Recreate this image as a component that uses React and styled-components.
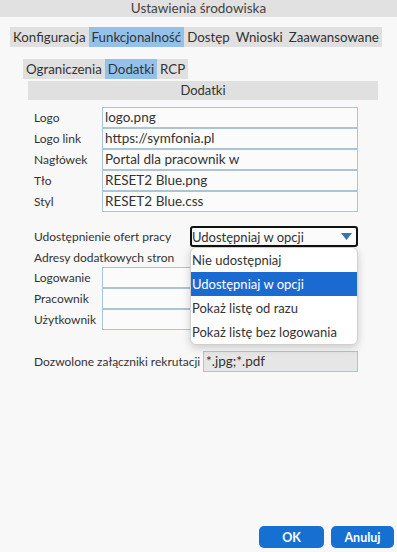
import styled, { createGlobalStyle } from 'styled-components'

const GlobalStyle = createGlobalStyle`
  html, body {
    margin: 0;
    padding: 0;
    background: #f8f8f8;
  }
  body {
    font-family: Lato, "Open Sans", sans-serif;
    font-size: 12px;
    color: #333333;
  }
`

const Window = styled.div`
  width: 397px;
  height: 552px;
  display: flex;
  flex-direction: column;
  background: #f8f8f8;
`

const TitleBar = styled.div`
  height: 17px;
  line-height: 16px;
  font-size: 13.5px;
  text-align: center;
  background: #e1e1e1;
  color: #444;
`

const Body = styled.div`
  flex: 1;
  display: flex;
  flex-direction: column;
`

const TabBar = styled.div`
  display: flex;
  align-self: flex-start;
  margin: ${({ $sub }) => ($sub ? '12px 0 0 23px' : '10px 0 0 10px')};
  background: #e0e0e0;
`

const Tab = styled.div`
  height: 20px;
  line-height: 20px;
  padding: 0 3px;
  font-size: 13.3px;
  background: ${({ $active }) => ($active ? '#93c1ea' : 'transparent')};
  white-space: nowrap;
`

const SectionHeader = styled.div`
  margin: 2px 19px 0 28px;
  height: 19px;
  line-height: 19px;
  font-size: 13px;
  text-align: center;
  background: #e0e0e0;
`

const Form = styled.div`
  display: flex;
  flex-direction: column;
  padding: 7px 39px 0 34px;
`

const FieldGroup = styled.div`
  display: flex;
  flex-direction: column;
  margin-top: ${({ $mt = 0 }) => $mt}px;
  & > * + * {
    margin-top: -1px;
  }
`

const FieldRow = styled.div`
  display: flex;
  align-items: center;
  height: 21px;
  margin-top: ${({ $mt = 0 }) => $mt}px;
`

const Label = styled.div`
  width: ${({ $w = 68 }) => $w}px;
  flex: none;
  white-space: nowrap;
`

const Input = styled.div`
  flex: 1;
  height: 21px;
  box-sizing: border-box;
  border: 1px solid #a9c5d6;
  background: ${({ $disabled }) => ($disabled ? '#e6e6e6' : '#fbfbfb')};
  padding: 0 2px;
  line-height: 19px;
  font-size: 13.5px;
  color: #333;
  white-space: nowrap;
  overflow: hidden;
`

const SelectWrap = styled.div`
  position: relative;
  flex: 1;
  align-self: stretch;
`

const Select = styled.div`
  height: 21px;
  box-sizing: border-box;
  border: 2px solid #111;
  border-radius: 3px;
  background: #fbfbfb;
  display: flex;
  align-items: center;
  justify-content: space-between;
  padding: 0 4px 0 0;
  font-size: 13px;
  color: #333;
  white-space: nowrap;
`

const Arrow = styled.svg`
  width: 11px;
  height: 7px;
  display: block;
`

const Menu = styled.div`
  position: absolute;
  left: 0;
  right: 0;
  top: 21px;
  background: #ffffff;
  border: 1px solid #d0d0d0;
  border-radius: 6px;
  box-shadow: 0 3px 8px rgba(0, 0, 0, 0.18);
  overflow: hidden;
  z-index: 5;
`

const MenuItem = styled.div`
  height: 24px;
  line-height: 24px;
  padding-left: 1px;
  font-size: 13px;
  background: ${({ $active }) => ($active ? '#1b6ad1' : 'transparent')};
  color: ${({ $active }) => ($active ? '#ffffff' : '#333')};
  white-space: nowrap;
`

const Footer = styled.div`
  display: flex;
  justify-content: flex-end;
  gap: 7px;
  padding: 0 3px 4px 0;
`

const Button = styled.button`
  width: ${({ $w }) => $w}px;
  height: 22px;
  border: none;
  border-radius: 5px;
  background: #1670d1;
  color: #ffffff;
  font-family: Lato, "Open Sans", sans-serif;
  font-size: 12.5px;
  font-weight: 700;
  padding: 0;
`

const fields = [
  ['Logo', 'logo.png'],
  ['Logo link', 'https://symfonia.pl'],
  ['Nagłówek', 'Portal dla pracownik w'],
  ['Tło', 'RESET2 Blue.png'],
  ['Styl', 'RESET2 Blue.css'],
]

const options = [
  'Nie udostępniaj',
  'Udostępniaj w opcji',
  'Pokaż listę od razu',
  'Pokaż listę bez logowania',
]

export default function App() {
  return (
    <>
      <GlobalStyle />
      <Window>
        <TitleBar>Ustawienia środowiska</TitleBar>
        <Body>
          <TabBar>
            <Tab>Konfiguracja</Tab>
            <Tab $active>Funkcjonalność</Tab>
            <Tab>Dostęp</Tab>
            <Tab>Wnioski</Tab>
            <Tab>Zaawansowane</Tab>
          </TabBar>
          <TabBar $sub>
            <Tab>Ograniczenia</Tab>
            <Tab $active>Dodatki</Tab>
            <Tab>RCP</Tab>
          </TabBar>
          <SectionHeader>Dodatki</SectionHeader>
          <Form>
            <FieldGroup>
              {fields.map(([label, value]) => (
                <FieldRow key={label}>
                  <Label>{label}</Label>
                  <Input>{value}</Input>
                </FieldRow>
              ))}
            </FieldGroup>
            <FieldRow $mt={14}>
              <Label $w={156}>Udostępnienie ofert pracy</Label>
              <SelectWrap>
                <Select>
                  <span>Udostępniaj w opcji</span>
                  <Arrow viewBox="0 0 11 7">
                    <path d="M0 0 H11 L5.5 7 Z" fill="#3b70b6" />
                  </Arrow>
                </Select>
                <Menu>
                  {options.map((o, i) => (
                    <MenuItem key={o} $active={i === 1}>{o}</MenuItem>
                  ))}
                </Menu>
              </SelectWrap>
            </FieldRow>
            <FieldRow>
              <Label $w={160}>Adresy dodatkowych stron</Label>
            </FieldRow>
            <FieldGroup $mt={-1}>
              {['Logowanie', 'Pracownik', 'Użytkownik'].map((l) => (
                <FieldRow key={l}>
                  <Label>{l}</Label>
                  <Input />
                </FieldRow>
              ))}
            </FieldGroup>
            <FieldRow $mt={21}>
              <Label $w={169}>Dozwolone załączniki rekrutacji</Label>
              <Input $disabled>*.jpg;*.pdf</Input>
            </FieldRow>
          </Form>
        </Body>
        <Footer>
          <Button $w={65}>OK</Button>
          <Button $w={63}>Anuluj</Button>
        </Footer>
      </Window>
    </>
  )
}
